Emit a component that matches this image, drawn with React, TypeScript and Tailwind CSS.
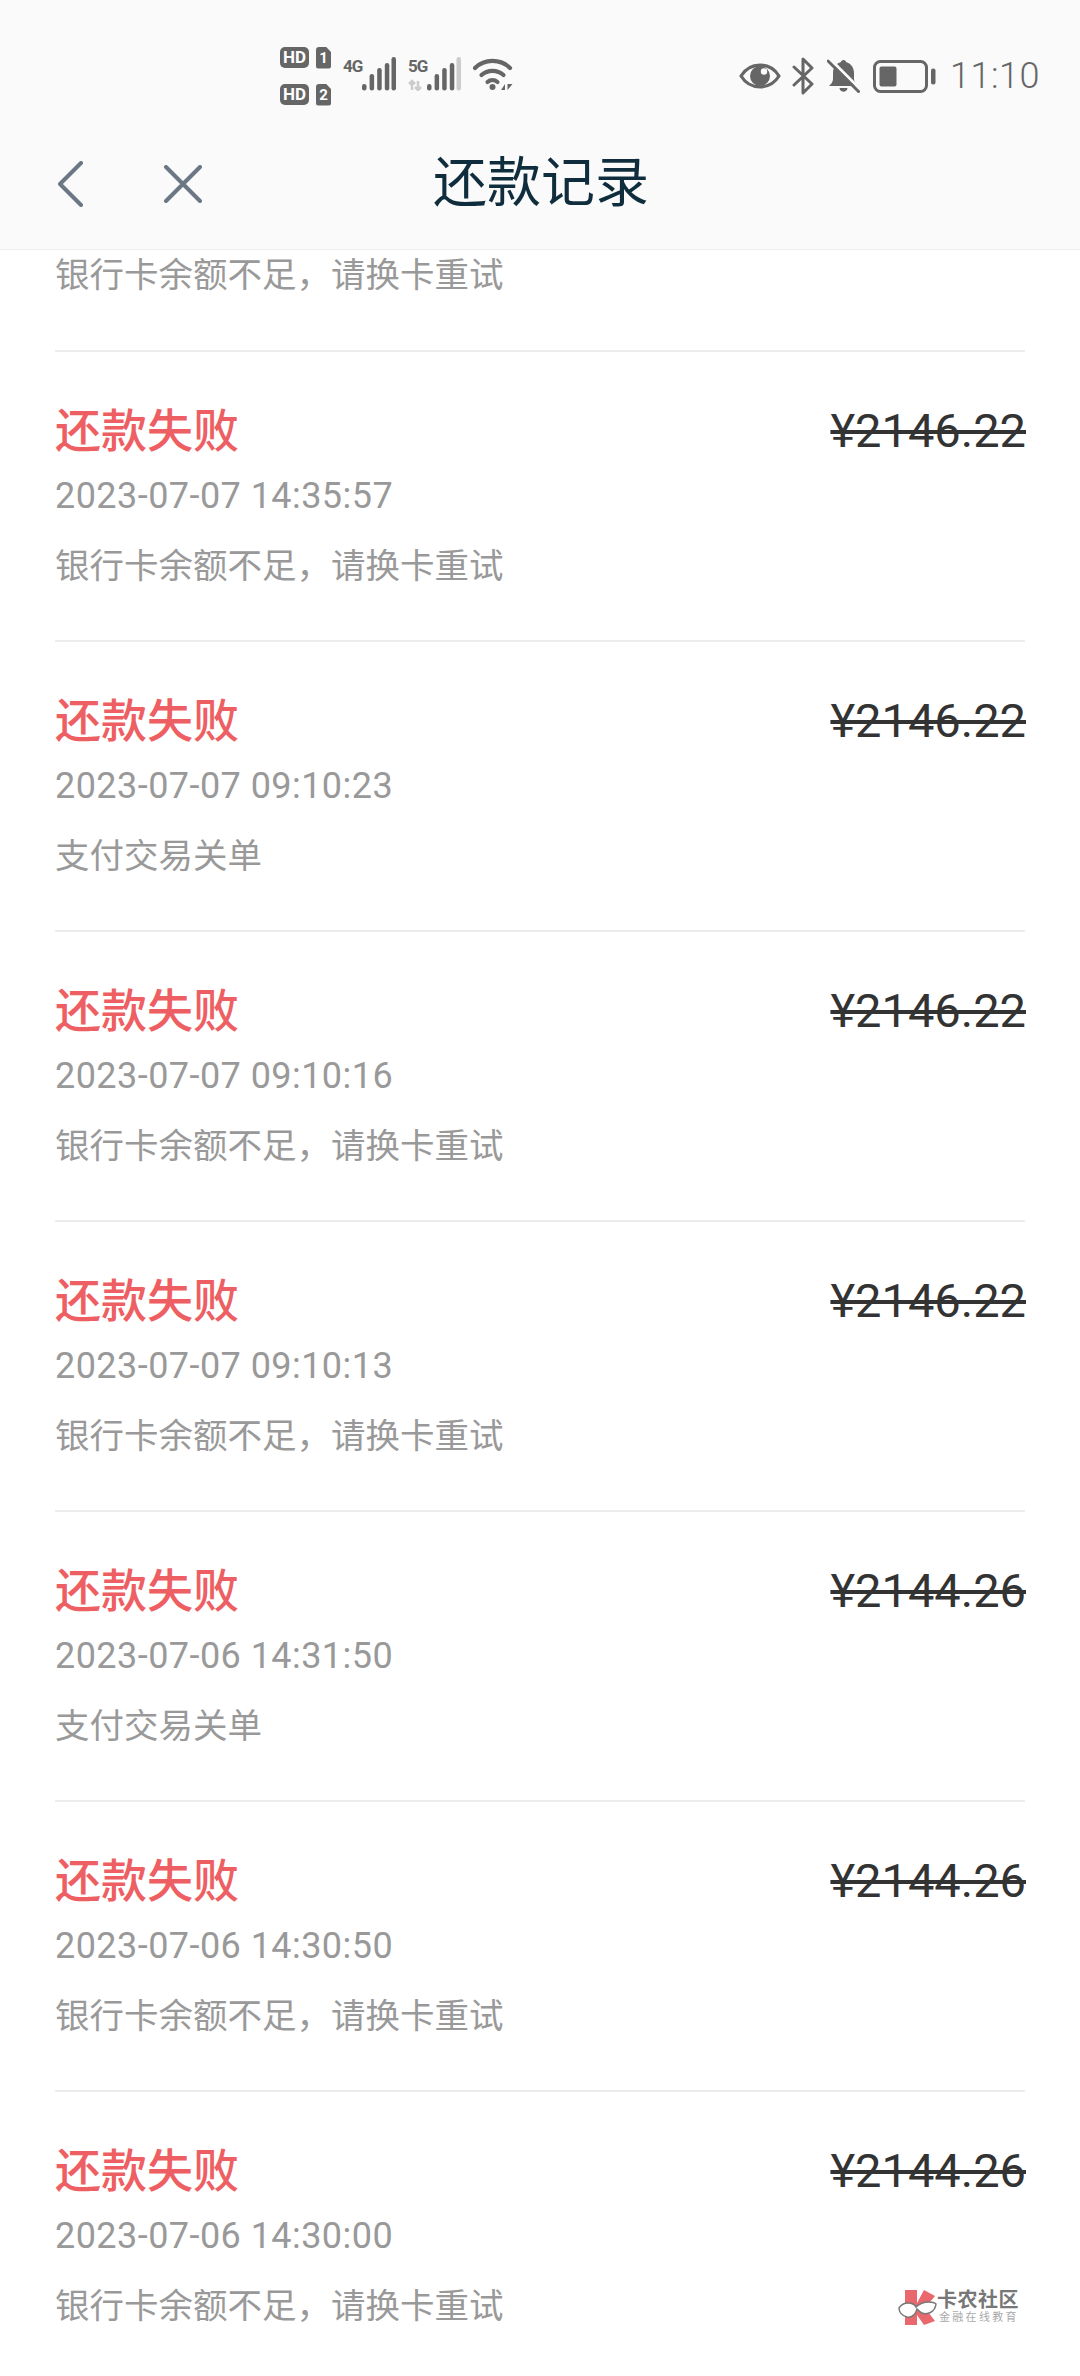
const FONT = "font-['Roboto','Noto_Sans_CJK_SC',sans-serif]"

const RECORDS = [
  { amount: '¥2146.22', time: '2023-07-07 14:35:57', reason: '银行卡余额不足，请换卡重试' },
  { amount: '¥2146.22', time: '2023-07-07 09:10:23', reason: '支付交易关单' },
  { amount: '¥2146.22', time: '2023-07-07 09:10:16', reason: '银行卡余额不足，请换卡重试' },
  { amount: '¥2146.22', time: '2023-07-07 09:10:13', reason: '银行卡余额不足，请换卡重试' },
  { amount: '¥2144.26', time: '2023-07-06 14:31:50', reason: '支付交易关单' },
  { amount: '¥2144.26', time: '2023-07-06 14:30:50', reason: '银行卡余额不足，请换卡重试' },
  { amount: '¥2144.26', time: '2023-07-06 14:30:00', reason: '银行卡余额不足，请换卡重试' },
]

function SimBadge({ n }: { n: string }) {
  return (
    <div className="flex items-center gap-[7px]">
      <span className="w-[29px] h-[21px] rounded-[5px] bg-[#666] text-white text-[17px] leading-[21px] font-bold text-center">HD</span>
      <span className="w-[15px] h-[22px] rounded-[3px] bg-[#666] text-white text-[15px] leading-[22px] font-bold text-center [clip-path:polygon(0_0,65%_0,100%_25%,100%_100%,0_100%)]">{n}</span>
    </div>
  )
}

function Signal({ label, weak }: { label: string; weak?: boolean }) {
  return (
    <div className="flex items-start w-[53px] h-[34px]">
      <span className="w-[20px] h-[18px] text-[17px] leading-[18px] font-bold text-[#666] tracking-[-1px] whitespace-nowrap">{label}</span>
      <svg className="-ml-[20px]" width="53" height="34" viewBox="0 0 53 34" fill="#666">
        {weak && <path d="M4 33v-9M1 27l3-3 3 3M10 24v9M7 30l3 3 3-3" stroke="#ccc" strokeWidth="2.500" fill="none" />}
        <rect x="19" y="27" width="4.500" height="6.500" rx="2.200" />
        <rect x="26.600" y="17" width="4.500" height="16.500" rx="2.200" />
        <rect x="34.200" y="11" width="4.500" height="22.500" rx="2.200" />
        <rect x="41.800" y="6" width="4.500" height="27.500" rx="2.200" />
        <rect x="48.500" y="0" width="4.500" height="33.500" rx="2.200" fill={weak ? '#ccc' : '#666'} />
      </svg>
    </div>
  )
}

function Wifi() {
  return (
    <svg width="41" height="34" viewBox="0 0 41 34" fill="none" stroke="#666" strokeWidth="4.200" strokeLinecap="round">
      <path d="M2 11C11.500 1.500 27.500 1.500 37 11" />
      <path d="M8.500 18C14.500 12.500 24.500 12.500 30.500 18" />
      <path d="M14.500 25C17.500 22.500 21.500 22.500 24.500 25" />
      <circle cx="19.500" cy="30" r="3" fill="#666" stroke="none" />
      <path d="M28 33l4-6v6zM34.500 27v6l5-6z" fill="#666" stroke="none" />
    </svg>
  )
}

function Eye() {
  return (
    <svg width="42" height="28" viewBox="0 0 42 28" fill="none">
      <path d="M2 14C11 -0.500 31 -0.500 40 14C31 28.500 11 28.500 2 14Z" stroke="#666" strokeWidth="3.200" strokeLinejoin="round" />
      <circle cx="21" cy="14" r="10" fill="#666" />
      <circle cx="25" cy="9.500" r="3.200" fill="#fafafa" />
    </svg>
  )
}

function Bluetooth() {
  return (
    <svg width="22" height="38" viewBox="0 0 22 38" fill="none" stroke="#666" strokeWidth="3" strokeLinejoin="round" strokeLinecap="round">
      <path d="M2 10L20 27L11 36V2L20 11L2 28" />
    </svg>
  )
}

function BellOff() {
  return (
    <svg width="33" height="34" viewBox="0 0 33 34" fill="#666">
      <path d="M16.500 1C18 1 19 2 19 3C24 4.500 27 8.500 27 14V20C27 23 29 25 31 27H2C4 25 6 23 6 20V14C6 8.500 9 4.500 14 3C14 2 15 1 16.500 1Z" />
      <path d="M12.500 29H20.500C20 34 13 34 12.500 29Z" />
      <path d="M3 0L33 30" stroke="#fafafa" strokeWidth="3" />
      <path d="M1 2L31.500 32.500" stroke="#666" strokeWidth="3" strokeLinecap="round" />
    </svg>
  )
}

function Battery() {
  return (
    <svg width="63" height="33" viewBox="0 0 63 33" fill="none">
      <rect x="1.500" y="1.500" width="52" height="30" rx="6" stroke="#666" strokeWidth="3" />
      <rect x="6.500" y="6.500" width="17" height="20" rx="2" fill="#666" />
      <rect x="58" y="8.500" width="4.500" height="16" rx="2" fill="#666" />
    </svg>
  )
}

function StatusBar() {
  return (
    <div className="h-[130px] pt-[22px] pl-[280px] pr-[40px] flex items-center justify-between text-[#666]">
      <div className="flex items-center">
        <div className="flex flex-col gap-[15px]">
          <SimBadge n="1" />
          <SimBadge n="2" />
        </div>
        <div className="flex items-center gap-[12px] ml-[12px] mt-[-4px]">
          <Signal label="4G" />
          <Signal label="5G" weak />
          <Wifi />
        </div>
      </div>
      <div className="flex items-center">
        <Eye />
        <div className="ml-[11px]"><Bluetooth /></div>
        <div className="ml-[13px]"><BellOff /></div>
        <div className="ml-[13px]"><Battery /></div>
        <span className="ml-[14px] text-[36px] leading-none font-light tracking-[0.5px]">11:10</span>
      </div>
    </div>
  )
}

function NavBar() {
  return (
    <div className="h-[120px] pb-[12px] pl-[56px] flex items-center">
      <svg width="28" height="46" viewBox="0 0 28 46" fill="none" stroke="#6b7785" strokeWidth="4" strokeLinecap="round" strokeLinejoin="round">
        <path d="M25 2L4 23L25 44" />
      </svg>
      <svg className="ml-[79px]" width="40" height="38" viewBox="0 0 40 38" fill="none" stroke="#6b7785" strokeWidth="4" strokeLinecap="round">
        <path d="M3 2L37 36M37 2L3 36" />
      </svg>
      <h1 className="ml-[230px] text-[54px] leading-none font-normal text-[#0f2d3c]">还款记录</h1>
    </div>
  )
}

function RecordRow({ amount, time, reason }: { amount: string; time: string; reason: string }) {
  return (
    <div className="h-[290px] border-t-2 border-[#ededed] pt-[55px] flex justify-between">
      <div>
        <div className="text-[46px] leading-[48px] font-medium text-[#ee5f63]">还款失败</div>
        <div className="mt-[19px] text-[36px] leading-[44px] tracking-[0.45px] text-[#999]">{time}</div>
        <div className="mt-[26px] text-[34.500px] leading-[44px] text-[#999]">{reason}</div>
      </div>
      <div className="-mt-[2px] -mr-[1px] h-[52px] text-[47px] leading-[52px] text-[#333] line-through decoration-[4px]">{amount}</div>
    </div>
  )
}

export default function App() {
  return (
    <div className={`relative h-[2376px] overflow-hidden bg-white ${FONT}`}>
      <header className="h-[250px] bg-[#fafafa] border-b border-[#eeeeee]">
        <StatusBar />
        <NavBar />
      </header>

      <main className="px-[55px]">
        {/* row scrolled under the header, only its last line is visible */}
        <div className="h-[100px] pt-[3px] text-[34.500px] leading-[44px] text-[#999]">银行卡余额不足，请换卡重试</div>
        {RECORDS.map(r => (
          <RecordRow key={r.time} {...r} />
        ))}
      </main>

      {/* community watermark */}
      <div className="absolute left-[898px] top-[2288px] flex items-center">
        <svg width="39" height="38" viewBox="0 0 39 38">
          <path d="M7 2H19V15L26 2L37 8L27 20L37 33L26 37L19 27V37H7Z" fill="#e9686e" />
          <path d="M10 15C14 15 17 17 18 19C20 17 25 14 31 14C35 14 37 15 38 16C37 24 30 27 24 25C22 24 20 22 19 21C18 25 15 30 9 29C4 28 1 24 1 20C3 17 7 15 10 15Z" fill="#fff" stroke="#777" strokeWidth="1.500" />
        </svg>
        <div className="flex flex-col">
          <span className="text-[20px] leading-[21px] font-bold text-[#777] tracking-[0.500px]">卡农社区</span>
          <span className="text-[11px] leading-[13px] text-[#aaa] tracking-[2.300px] pl-[2px]">金融在线教育</span>
        </div>
      </div>
    </div>
  )
}
